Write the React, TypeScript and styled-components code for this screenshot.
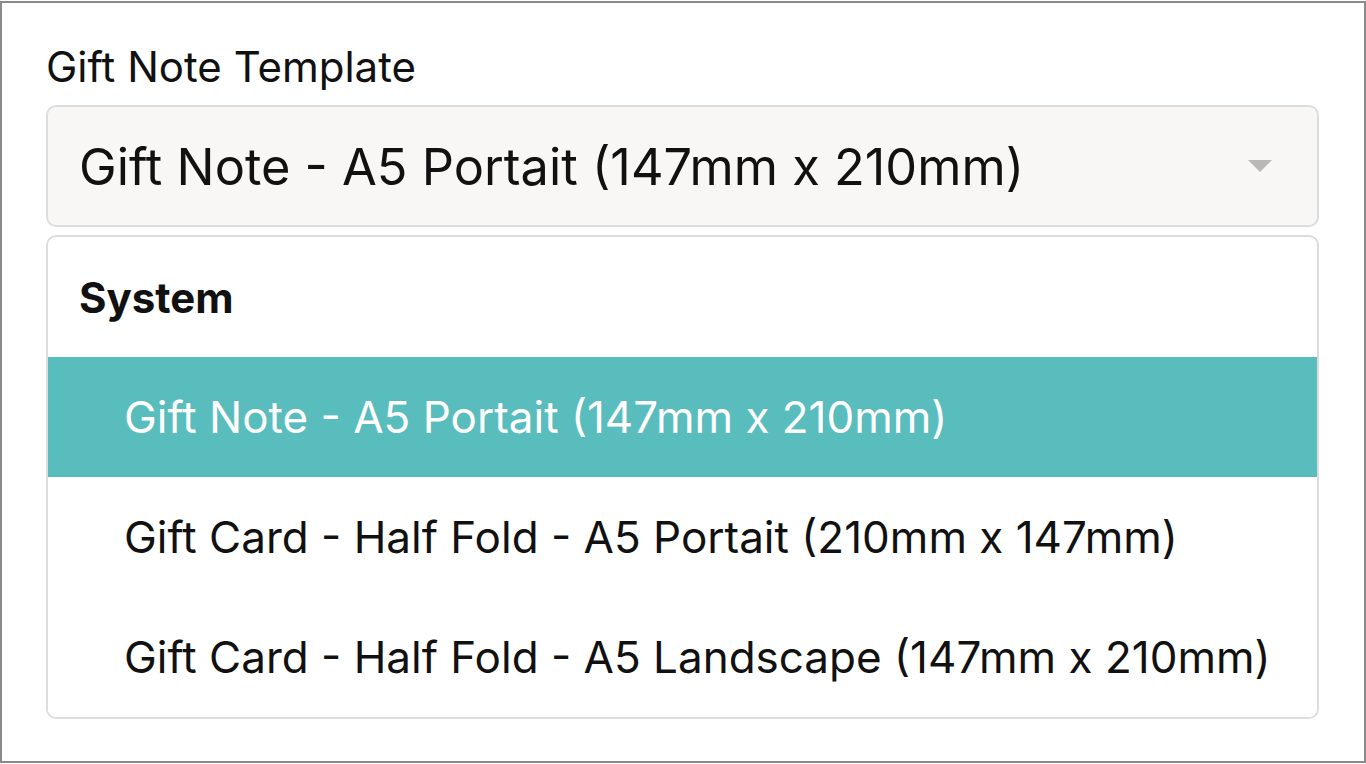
import { useState } from 'react';
import styled, { createGlobalStyle } from 'styled-components';

const GlobalStyle = createGlobalStyle`
  html, body {
    margin: 0;
    padding: 0;
    background: #ffffff;
  }
  body {
    font-family: Inter, "Open Sans", sans-serif;
    color: #111111;
  }
  * {
    box-sizing: border-box;
  }
`;

interface Template {
  id: string;
  name: string;
}

const templates: Template[] = [
  { id: 'note-a5', name: 'Gift Note - A5 Portait (147mm x 210mm)' },
  { id: 'card-portrait', name: 'Gift Card - Half Fold - A5 Portait (210mm x 147mm)' },
  { id: 'card-landscape', name: 'Gift Card - Half Fold - A5 Landscape (147mm x 210mm)' },
];

function App() {
  // 선택된 템플릿
  const [selectedId, setSelectedId] = useState<string>('note-a5');
  const selected = templates.find((t) => t.id === selectedId);

  return (
    <>
      <GlobalStyle />
      <Frame>
        <FieldLabel>Gift Note Template</FieldLabel>
        <SelectBox>
          <SelectValue>{selected?.name}</SelectValue>
          <Caret />
        </SelectBox>
        <OptionList>
          <GroupHeader>System</GroupHeader>
          {templates.map((t) => (
            <OptionRow key={t.id} $active={t.id === selectedId} onClick={() => setSelectedId(t.id)}>
              {t.name}
            </OptionRow>
          ))}
        </OptionList>
      </Frame>
    </>
  );
}

const Frame = styled.div`
  width: 1366px;
  height: 762px;
  margin-top: 1px;
  border: 2px solid #8a8a8a;
  padding: 39px 45px 0 44px;
  display: flex;
  flex-direction: column;
`;

const FieldLabel = styled.div`
  font-size: 42px;
  line-height: 50px;
  font-weight: 400;
  color: #111111;
  margin-bottom: 13px;
  white-space: nowrap;
`;

const SelectBox = styled.div`
  height: 122px;
  border: 2px solid #dddddd;
  border-radius: 10px;
  background: #f8f7f5;
  display: flex;
  align-items: center;
  justify-content: space-between;
  padding: 0 45px 0 31px;
`;

const SelectValue = styled.span`
  font-size: 50.5px;
  color: #111111;
  white-space: nowrap;
`;

const Caret = styled.span`
  width: 0;
  height: 0;
  border-left: 12px solid transparent;
  border-right: 12px solid transparent;
  border-top: 12px solid #b8b8b8;
`;

const OptionList = styled.div`
  margin-top: 8px;
  border: 2px solid #dddddd;
  border-radius: 10px;
  background: #ffffff;
  overflow: hidden;
  display: flex;
  flex-direction: column;
`;

const GroupHeader = styled.div`
  height: 120px;
  display: flex;
  align-items: center;
  padding-left: 31px;
  font-size: 42px;
  font-weight: 700;
  color: #111111;
`;

const OptionRow = styled.div<{ $active: boolean }>`
  height: 120px;
  display: flex;
  align-items: center;
  padding-left: 76px;
  font-size: 44px;
  white-space: nowrap;
  cursor: pointer;
  background: ${(p) => (p.$active ? '#5abdbd' : '#ffffff')};
  color: ${(p) => (p.$active ? '#ffffff' : '#111111')};
`;

export default App;
